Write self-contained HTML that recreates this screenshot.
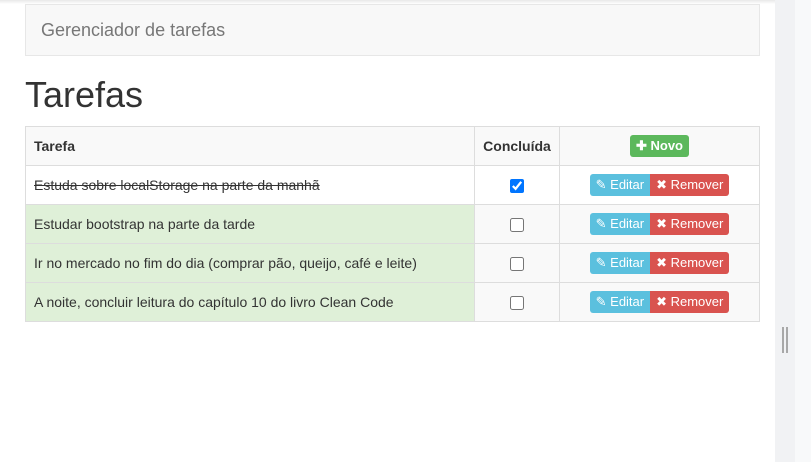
<!DOCTYPE html>
<html><head><meta charset="utf-8"><style>
body{margin:0;width:811px;height:462px;background:#fff;font-family:"Liberation Sans",sans-serif;position:relative;overflow:hidden;color:#333}
.side{position:absolute;left:775px;top:0;width:20px;height:462px;background:#f1f2f4}
.side2{position:absolute;left:795px;top:0;width:16px;height:462px;background:#f8f9fa}
.bar{position:absolute;top:327px;width:2px;height:26px;background:#a8a8a8}
.topsh{position:absolute;left:0;top:0;width:775px;height:4px;background:linear-gradient(#e8e8e8,#fff)}
.nav{position:absolute;left:25px;top:4px;width:733px;height:50px;background:#f8f8f8;border:1px solid #e7e7e7}
.nav span{position:absolute;left:15px;top:15px;font-size:18px;color:#777}
h1{position:absolute;left:25px;top:74px;margin:0;font-size:36px;font-weight:400;color:#333}
table{position:absolute;left:25px;top:126px;width:735px;border-collapse:collapse;font-size:14px}
td,th{border:1px solid #ddd;padding:0 8px;height:38px}
th{text-align:left;background:#f9f9f9}
.c{text-align:center}
tr.g td:first-child{background:#dff0d8}
tr.g td{background:#f9f9f9}
.btn{display:inline-block;color:#fff;font-size:13px;padding:0 6px;height:22px;line-height:22px;border-radius:3px;vertical-align:middle}
.e{background:#5bc0de;border-radius:3px 0 0 3px}
.r{background:#d9534f;border-radius:0 3px 3px 0}
.n{background:#5cb85c}
input{width:14px;height:14px;margin:0;vertical-align:middle}
</style></head><body>
<div class="topsh"></div>
<div class="side"></div><div class="side2"></div>
<div class="bar" style="left:782px"></div><div class="bar" style="left:786px"></div>
<div class="nav"><span>Gerenciador de tarefas</span></div>
<h1>Tarefas</h1>
<table>
<tr><th style="width:432px">Tarefa</th><th class="c" style="width:68px">Concluída</th><th class="c"><span class="btn n"><b>✚</b> Novo</span></th></tr>
<tr><td><s>Estuda sobre localStorage na parte da manhã</s></td><td class="c"><input type="checkbox" checked></td><td class="c"><span class="btn e">✎ Editar</span><span class="btn r">✖ Remover</span></td></tr>
<tr class="g"><td>Estudar bootstrap na parte da tarde</td><td class="c"><input type="checkbox"></td><td class="c"><span class="btn e">✎ Editar</span><span class="btn r">✖ Remover</span></td></tr>
<tr class="g"><td>Ir no mercado no fim do dia (comprar pão, queijo, café e leite)</td><td class="c"><input type="checkbox"></td><td class="c"><span class="btn e">✎ Editar</span><span class="btn r">✖ Remover</span></td></tr>
<tr class="g"><td>A noite, concluir leitura do capítulo 10 do livro Clean Code</td><td class="c"><input type="checkbox"></td><td class="c"><span class="btn e">✎ Editar</span><span class="btn r">✖ Remover</span></td></tr>
</table>
</body></html>
